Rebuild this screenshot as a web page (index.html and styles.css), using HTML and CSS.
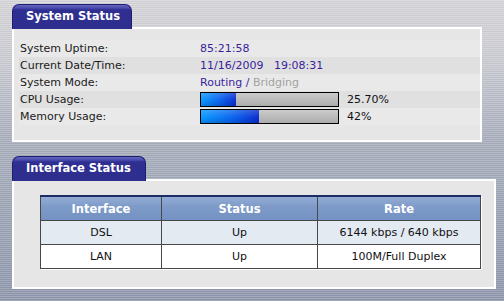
FILE: index.html
```html
<!DOCTYPE html>
<html>
<head>
    <title>Status</title>
    <link rel="stylesheet" href="styles.css">
</head>
<body>
    <div class="panel panel-system">
        <div class="tab tab-system">System Status</div>
        <div class="box box-system">
            <div class="row">
                <span class="label">System Uptime:</span>
                <span class="value">85:21:58</span>
            </div>
            <div class="row row-alt">
                <span class="label">Current Date/Time:</span>
                <span class="value">11/16/2009&nbsp;&nbsp;&nbsp;19:08:31</span>
            </div>
            <div class="row">
                <span class="label">System Mode:</span>
                <span class="value">Routing / <span class="muted">Bridging</span></span>
            </div>
            <div class="row row-alt">
                <span class="label">CPU Usage:</span>
                <span class="bar"><span class="bar-fill" style="width: 25.7%"></span></span>
                <span class="percent">25.70%</span>
            </div>
            <div class="row">
                <span class="label">Memory Usage:</span>
                <span class="bar"><span class="bar-fill" style="width: 42%"></span></span>
                <span class="percent">42%</span>
            </div>
        </div>
    </div>

    <div class="panel panel-iface">
        <div class="tab tab-iface">Interface Status</div>
        <div class="box box-iface">
            <table class="iface-table">
                <tr>
                    <th class="col-name">Interface</th>
                    <th class="col-status">Status</th>
                    <th class="col-rate">Rate</th>
                </tr>
                <tr class="shaded">
                    <td>DSL</td>
                    <td>Up</td>
                    <td>6144 kbps / 640 kbps</td>
                </tr>
                <tr>
                    <td>LAN</td>
                    <td>Up</td>
                    <td>100M/Full Duplex</td>
                </tr>
            </table>
        </div>
    </div>
</body>
</html>
```

FILE: styles.css
```css
html {
    min-height: 100%;
    background:
        repeating-linear-gradient(to bottom, rgba(255, 255, 255, 0.16) 0, rgba(255, 255, 255, 0.16) 1px, rgba(0, 0, 0, 0.03) 1px, rgba(0, 0, 0, 0.03) 2px),
        linear-gradient(to bottom, #d6d6da 0, #cbccd3 60px, #a9afbd 140px, #9ca4b5 220px, #9098ad 301px);
}
body {
    margin: 0;
    padding: 4px 0 0 12px;
    font-family: "DejaVu Sans", Verdana, sans-serif;
    font-size: 11px;
    color: #1a1a1a;
}
.panel {
    display: flex;
    flex-direction: column;
    align-items: flex-start;
}
.panel-iface {
    margin-top: 14px;
}
.tab {
    position: relative;
    z-index: 1;
    height: 25px;
    margin-bottom: -2px;
    box-sizing: border-box;
    padding: 3px 0 0 13px;
    border: 1px solid #1e1e70;
    border-bottom: none;
    border-radius: 7px 7px 0 0;
    background: linear-gradient(to bottom, #6666c0 0, #4a4aae 3px, #2f2f92 5px, #2e2e8e 100%);
    color: #ffffff;
    font-weight: bold;
    font-size: 11.5px;
    line-height: 16px;
}
.tab-system {
    width: 120px;
}
.tab-iface {
    width: 134px;
}
.box {
    box-sizing: border-box;
    border: 2px solid #ffffff;
    background-color: #e6e6e6;
}
.box-system {
    width: 470px;
    padding: 11px 0 15px 5px;
}
.box-iface {
    width: 484px;
    padding: 14px 0 18px 26px;
}
.row {
    display: flex;
    align-items: center;
    height: 17px;
    background-color: #e9e9e9;
}
.row-alt {
    background-color: #e0e0e0;
}
.label {
    width: 180px;
    padding-left: 1px;
}
.value {
    color: #3a1f9c;
}
.muted {
    color: #a2a2a2;
}
.bar {
    display: block;
    width: 139px;
    height: 15px;
    box-sizing: border-box;
    border: 1px solid #000000;
    background: linear-gradient(to bottom, #cbcbcb 0, #bcbcbc 50%, #acacac 100%);
}
.bar-fill {
    display: block;
    height: 100%;
    background:
        linear-gradient(to bottom, rgba(255, 255, 255, 0.18) 0, rgba(255, 255, 255, 0) 60%, rgba(0, 0, 40, 0.15) 100%),
        linear-gradient(to right, #0a98ff 0, #0a6af0 50%, #0a2ecf 100%);
}
.percent {
    margin-left: 8px;
    color: #111111;
}
.iface-table {
    width: 441px;
    border-collapse: collapse;
    box-shadow: 1px 1px 0 #ffffff;
    font-size: 11px;
}
.iface-table th, .iface-table td {
    border: 1px solid #474747;
    text-align: center;
    padding: 0;
}
.iface-table th {
    height: 23px;
    border-top: 2px solid #1e2c68;
    background: linear-gradient(to bottom, #93acd4 0, #7e9bc8 40%, #7391c2 100%);
    color: #ffffff;
    font-size: 11.5px;
    font-weight: bold;
}
.iface-table td {
    height: 23px;
    background-color: #ffffff;
    color: #111111;
}
.iface-table .shaded td {
    background-color: #e3eaf2;
}
.col-name {
    width: 120px;
}
.col-status {
    width: 155px;
}
```
